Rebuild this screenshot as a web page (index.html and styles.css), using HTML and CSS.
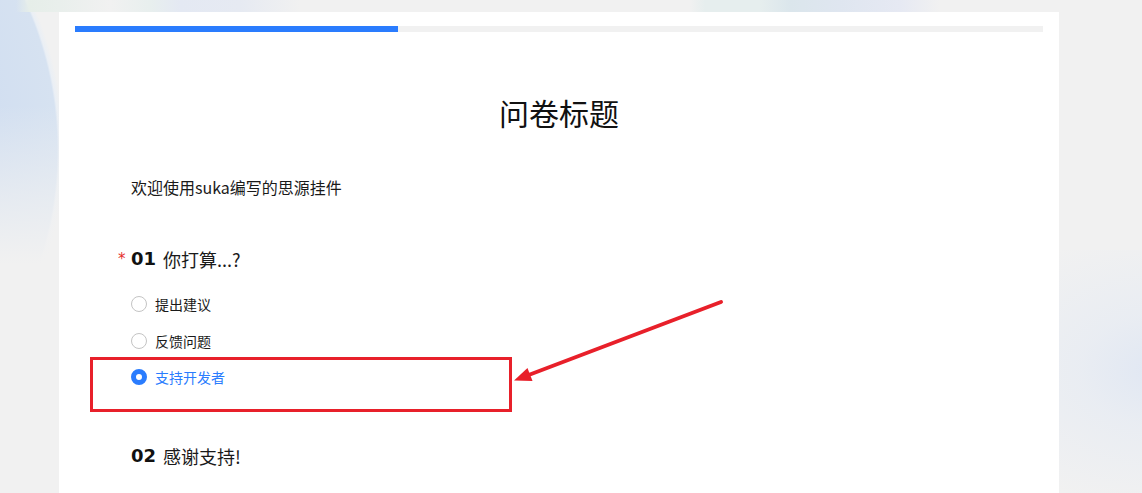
FILE: index.html
```html
<!DOCTYPE html>
<html lang="zh-CN">
<head>
<meta charset="utf-8">
<title>问卷标题</title>
<link rel="stylesheet" href="styles.css">
</head>
<body>
<div class="bg-circle"></div>
<div class="bg-glow"></div>
<div class="top-strip"></div>
<main class="card">
  <div class="progress"><div class="progress-fill" style="width:33.4%"></div></div>
  <h1 class="title">问卷标题</h1>
  <p class="desc">欢迎使用suka编写的思源挂件</p>
  <section class="question">
    <h2 class="q-head"><span class="req">*</span><span class="q-num">01</span><span class="q-text">你打算...?</span></h2>
    <ul class="options">
      <li class="option"><span class="radio"></span><span class="opt-text">提出建议</span></li>
      <li class="option"><span class="radio"></span><span class="opt-text">反馈问题</span></li>
      <li class="option selected"><span class="radio"></span><span class="opt-text">支持开发者</span></li>
    </ul>
  </section>
  <section class="question q2">
    <h2 class="q-head"><span class="q-num">02</span><span class="q-text">感谢支持!</span></h2>
  </section>
</main>
<svg class="annotation" width="1142" height="493" viewBox="0 0 1142 493">
  <rect x="91.5" y="358.5" width="419" height="52" fill="none" stroke="#e8202a" stroke-width="3"/>
  <line x1="721" y1="302" x2="526" y2="376" stroke="#e8202a" stroke-width="4" stroke-linecap="round"/>
  <polygon points="514,380.5 527.5,368 532.5,381" fill="#e8202a"/>
</svg>
</body>
</html>
```
FILE: styles.css
```css
html, body {
  margin: 0;
  padding: 0;
}
body {
  background: #f1f1f1;
  width: 1142px;
  height: 493px;
  overflow: hidden;
  position: relative;
  font-family: "Noto Sans CJK SC", "Noto Sans", sans-serif;
  color: #1a1a1a;
}
.bg-circle {
  position: absolute;
  left: 0;
  top: 0;
  width: 70px;
  height: 300px;
  background:
    linear-gradient(180deg, rgba(241,241,241,0) 35%, rgba(241,241,241,0.6) 65%, #f1f1f1 88%),
    radial-gradient(circle 362px at -300px 150px, #c8d8ef 0, #d2dff1 300px, #d6e2f1 357px, #eaeff5 359px, #f1f1f1 364px, #f1f1f1 100%);
}
.bg-glow {
  position: absolute;
  left: 1000px;
  top: 250px;
  width: 142px;
  height: 243px;
  background: radial-gradient(ellipse 200px 140px at 160px 120px, #e0e7f3 0%, rgba(230,235,243,0.7) 40%, rgba(241,241,241,0) 100%);
}
.top-strip {
  position: absolute;
  left: 0;
  top: 0;
  width: 1142px;
  height: 12px;
  background: linear-gradient(90deg, rgba(241,241,241,0) 0px, rgba(241,241,241,0) 16px, #e6eee9 30px, #e9efec 60px, #f1f1f1 110px, #e8efee 150px, #e4e9f3 180px, #e6eaf2 240px, #f1f1f1 300px, #f1f1f1 690px, #e6eeee 705px, #e6eeee 760px, #dbe6ec 790px, #dfe6f0 840px, #e6e9f3 900px, #f1f1f1 940px, #f1f1f1 100%);
}
.card {
  position: relative;
  margin: 12px 0 0 59px;
  width: 1000px;
  height: 481px;
  overflow: hidden;
  background: #fff;
  padding: 14px 16px 0;
  box-sizing: border-box;
}
.progress {
  height: 6px;
  background: #f1f1f1;
  display: flex;
}
.progress-fill {
  background: #2a7cfe;
  height: 100%;
}
.title {
  margin: 60px 0 0;
  text-align: center;
  font-size: 30px;
  line-height: 40px;
  font-weight: 400;
  color: #111;
}
.desc {
  margin: 43px 0 0 56px;
  font-size: 16px;
  line-height: 24px;
  color: #1a1a1a;
}
.question {
  margin: 47px 0 0 56px;
}
.q-head {
  margin: 0;
  display: flex;
  align-items: center;
  font-size: 18px;
  line-height: 26px;
  font-weight: 400;
  position: relative;
}
.req {
  position: absolute;
  left: -13px;
  top: 0;
  color: #e5302c;
  font-size: 15px;
  font-family: "DejaVu Sans", sans-serif;
}
.q-num {
  font-family: "DejaVu Sans", sans-serif;
  font-weight: 700;
  font-size: 18px;
  margin-right: 7px;
  color: #111;
}
.q-text {
  color: #1a1a1a;
}
.options {
  list-style: none;
  margin: 14px 0 0;
  padding: 0;
}
.option {
  display: flex;
  align-items: center;
  height: 36.5px;
  font-size: 14px;
}
.radio {
  width: 16px;
  height: 16px;
  border: 1px solid #c4c4c4;
  border-radius: 50%;
  box-sizing: border-box;
  margin-right: 8px;
  background: #fff;
}
.option.selected .radio {
  border: 5px solid #2a7cfe;
}
.option.selected .opt-text {
  color: #2a7cfe;
}
.q2 {
  margin-top: 47px;
}
.annotation {
  position: absolute;
  left: 0;
  top: 0;
  pointer-events: none;
}
```
